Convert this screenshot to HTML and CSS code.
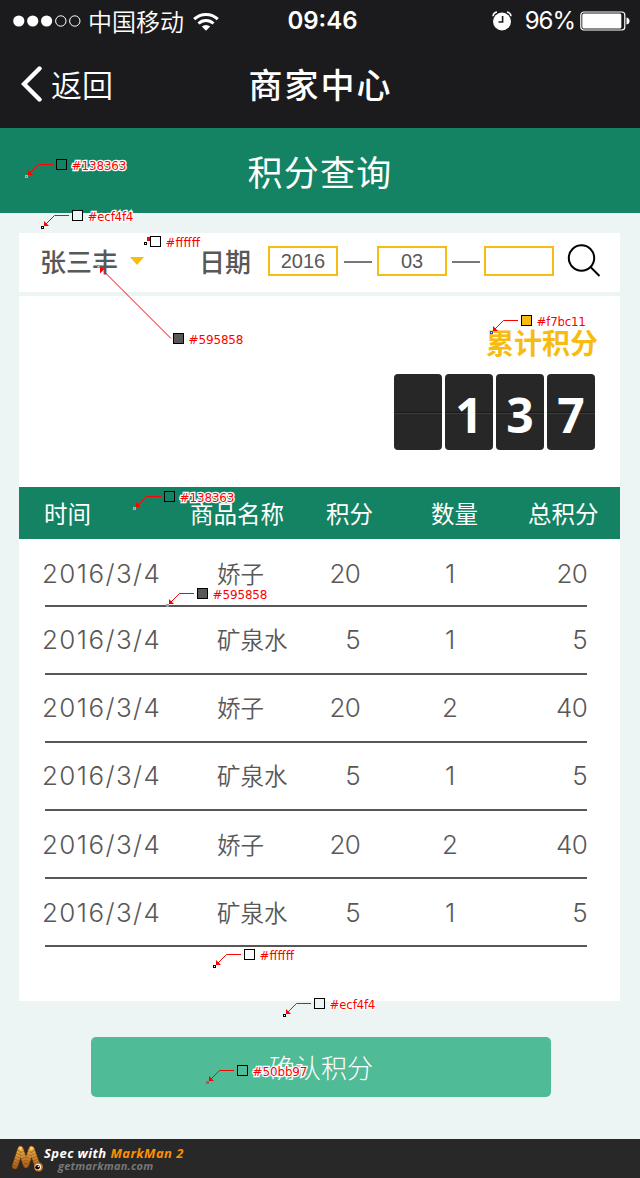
FILE: index.html
```html
<!DOCTYPE html>
<html lang="zh-CN">
<head>
<meta charset="utf-8">
<title>商家中心</title>
<link rel="stylesheet" href="styles.css">
</head>
<body>
<div class="screen">
  <header class="top">
    <div class="status">
      <div class="status-left">
        <svg class="signal" width="68" height="12" viewBox="0 0 68 12"><g fill="#fff"><circle cx="5.8" cy="6" r="5.6"/><circle cx="19.7" cy="6" r="5.6"/><circle cx="33.6" cy="6" r="5.6"/></g><g fill="none" stroke="#fff"><circle cx="47.8" cy="6" r="5.2"/><circle cx="61.8" cy="6" r="5.2"/></g></svg>
        <span class="carrier">中国移动</span>
        <svg width="26" height="19" viewBox="0 0 26 19"><g fill="none" stroke="#fff" stroke-width="3"><path d="M1.2 7.2a17 17 0 0 1 23.6 0"/><path d="M5.5 11.5a11 11 0 0 1 15 0"/></g><path d="M8.8 14.6a6.3 6.3 0 0 1 8.4 0L13 18.8z" fill="#fff"/></svg>
      </div>
      <span class="clock">09:46</span>
      <div class="status-right">
        <svg width="20" height="20" viewBox="0 0 20 20"><circle cx="10" cy="10.5" r="9" fill="#fff"/><path d="M1 5.2Q1.300 1.800 5 1.100M19 5.200Q18.700 1.800 15 1.100" fill="none" stroke="#fff" stroke-width="1.500"/><path d="M10.600 5v6H6.500" fill="none" stroke="#1b1b1e" stroke-width="1.600"/></svg>
        <span class="percent">96%</span>
        <svg width="50" height="20" viewBox="0 0 50 20"><rect x=".8" y="1" width="44" height="18" rx="3" fill="none" stroke="#fff" stroke-width="1.200"/><rect x="2.300" y="2.500" width="39" height="15" rx="1.500" fill="#fff"/><path d="M46.500 6.500q3 .5 3 3.500t-3 3.500z" fill="#fff"/></svg>
      </div>
    </div>
    <nav class="nav">
      <a class="back"><svg width="22" height="36" viewBox="0 0 22 36"><path d="M18.500 2.500L3 18l15.500 15.500" fill="none" stroke="#fff" stroke-width="4.400" stroke-linecap="round"/></svg><span>返回</span></a>
      <h1>商家中心</h1>
    </nav>
  </header>
  <h2 class="title">积分查询</h2>
  <main class="content">
    <section class="filter">
      <span class="person">张三丰</span><i class="caret"></i>
      <span class="date">日期</span>
      <span class="field">2016</span><i class="dash"></i><span class="field">03</span><i class="dash short"></i><span class="field"></span>
      <svg class="search" width="34" height="34" viewBox="0 0 34 34"><g fill="none" stroke="#000" stroke-width="2"><circle cx="14.500" cy="14" r="12.700"/><path d="M23.500 23L32.500 32"/></g></svg>
    </section>
    <section class="panel">
      <div class="total">
        <div class="total-label">累计积分</div>
        <div class="counter"><b></b><b>1</b><b>3</b><b>7</b></div>
      </div>
      <div class="thead"><span>时间</span><span>商品名称</span><span>积分</span><span>数量</span><span>总积分</span></div>
      <div class="rows">
        <div class="row first"><span>2016/3/4</span><span class="name">娇子</span><span>20</span><span>1</span><span>20</span></div>
        <div class="row"><span>2016/3/4</span><span class="name">矿泉水</span><span>5</span><span>1</span><span>5</span></div>
        <div class="row"><span>2016/3/4</span><span class="name">娇子</span><span>20</span><span>2</span><span>40</span></div>
        <div class="row"><span>2016/3/4</span><span class="name">矿泉水</span><span>5</span><span>1</span><span>5</span></div>
        <div class="row low"><span>2016/3/4</span><span class="name">娇子</span><span>20</span><span>2</span><span>40</span></div>
        <div class="row low"><span>2016/3/4</span><span class="name">矿泉水</span><span>5</span><span>1</span><span>5</span></div>
      </div>
    </section>
    <button class="confirm">确认积分</button>
  </main>
  <footer class="brand">
    <svg width="33" height="28" viewBox="0 0 33 28"><defs><linearGradient id="worm" x2="0" y2="1"><stop stop-color="#efb04c"/><stop offset="1" stop-color="#a85c18"/></linearGradient></defs><g fill="none" stroke-linecap="round" stroke-linejoin="round"><path d="M4 21L9.500 4L15 20L20.500 4L27 22" stroke="#6a380e" stroke-width="6.600"/><path d="M4 21L9.500 4L15 20L20.500 4L27 22" stroke="url(#worm)" stroke-width="5.200"/><path d="M4 21L9.500 4L15 20L20.500 4L27 22" stroke="#6e3a0d" stroke-width="5.500" stroke-linecap="butt" stroke-dasharray=".7 2.300" opacity=".5"/></g><circle cx="9.500" cy="3.500" r="1.400" fill="#ffd477"/><circle cx="20.500" cy="3.500" r="1.400" fill="#ffd477"/><circle cx="27.500" cy="22" r="4.500" fill="#c87a28"/><circle cx="27" cy="22" r="3.100" fill="#fff"/><circle cx="26.500" cy="22.300" r="2.300" fill="#080808"/><circle cx="27.300" cy="21.500" r=".7" fill="#fff"/></svg>
    <div class="brand-text"><div>Spec with <em>MarkMan 2</em></div><small>getmarkman.com</small></div>
  </footer>

  <svg class="notes" width="640" height="1178" viewBox="0 0 640 1178">
    <defs>
      <g id="pointer"><path d="M-3 5.500H-17.500L-26 14" fill="none" stroke="#f00"/><path d="M-28 11V16H-23z" fill="#f00"/></g>
      <rect id="dot" x="-30.500" y="16.500" width="2" height="2" fill="#fff" stroke="#000"/>
      <rect id="pinkdot" x="-30.500" y="16.500" width="2" height="2" fill="#777" stroke="#e994a8"/>
    </defs>
    <g transform="translate(56 159)"><use href="#pointer"/><use href="#pinkdot"/><rect class="swatch" fill="#138363"/><text x="15.500" y="11" textLength="55">#138363</text></g>
    <g transform="translate(72 210)"><use href="#pointer"/><use href="#dot"/><rect class="swatch" fill="#ecf4f4"/><text x="15.500" y="11" textLength="46">#ecf4f4</text></g>
    <g transform="translate(150 236)"><path d="M-3 1h3v4h-3z" fill="#f00"/><rect x="-5.500" y="6.500" width="2" height="2" fill="#fff" stroke="#000"/><rect class="swatch" fill="#fff"/><text x="15.500" y="11" textLength="34.500">#ffffff</text></g>
    <g transform="translate(173 333)"><path d="M-2 5.500L-69-61.500" stroke="#f00"/><path d="M-73-65.500v6l5-5z" fill="#f00"/><rect x="-75.500" y="-67.500" width="2" height="2" fill="#ccc" stroke="#999"/><rect class="swatch" fill="#595858"/><text x="15.500" y="11" textLength="55">#595858</text></g>
    <g transform="translate(521 315)"><use href="#pointer"/><rect x="-30.500" y="16.500" width="2" height="2" fill="#fff" stroke="#1f49d8"/><rect class="swatch" fill="#f7bc11"/><text x="15.500" y="11" textLength="49.500">#f7bc11</text></g>
    <g transform="translate(164 491)"><use href="#pointer"/><use href="#pinkdot"/><rect class="swatch" fill="#138363"/><text x="15.500" y="11" textLength="55">#138363</text></g>
    <g transform="translate(197 588)"><use href="#pointer"/><rect x="-30.500" y="16.500" width="2" height="2" fill="#aaa" stroke="#999"/><rect class="swatch" fill="#595858"/><text x="15.500" y="11" textLength="55">#595858</text></g>
    <g transform="translate(244 949)"><use href="#pointer"/><use href="#dot"/><rect class="swatch" fill="#fff"/><text x="15.500" y="11" textLength="34.500">#ffffff</text></g>
    <g transform="translate(314 998)"><use href="#pointer"/><use href="#dot"/><rect class="swatch" fill="#ecf4f4"/><text x="15.500" y="11" textLength="46">#ecf4f4</text></g>
    <g transform="translate(237 1065)"><use href="#pointer"/><rect x="-30.500" y="16.500" width="2" height="2" fill="#777" stroke="#c04d60"/><rect class="swatch" fill="#50bb97"/><text x="15.500" y="11" textLength="55">#50bb97</text></g>
  </svg>
</div>
</body>
</html>
```
FILE: styles.css
```css
* { box-sizing: border-box; }
body { margin: 0; font-family: "Noto Sans CJK SC", sans-serif; background: #ecf4f4; }
.screen { position: relative; width: 640px; height: 1178px; overflow: hidden; display: flex; flex-direction: column; }
.top { height: 128px; background: #1b1b1e; color: #fff; flex: none; }
.status { height: 40px; display: grid; grid-template-columns: 1fr auto 1fr; align-items: center; padding: 1px 10px 0 13px; }
.status-left, .status-right { display: flex; align-items: center; }
.status-right { justify-content: flex-end; }
.carrier { font-size: 24px; font-weight: 350; line-height: 38px; margin: 0 9px 0 7px; }
.clock { font: 600 24px/40px Inter, sans-serif; letter-spacing: 0; margin-left: 2px; }
.percent { font: 400 24px/40px Inter, sans-serif; margin: 0 5px 0 13px; letter-spacing: -1px; }
.nav { height: 88px; display: grid; grid-template-columns: 1fr auto 1fr; padding-left: 21px; align-items: center; }
.back { display: flex; align-items: center; gap: 8px; font-size: 31px; font-weight: 350; line-height: 86px; }
.nav h1 { margin: 0 0 0 -20px; font-size: 34px; font-weight: 500; letter-spacing: 2px; line-height: 88px; }
.title { margin: 0; height: 85px; flex: none; background: #138363; color: #fff; font-size: 35px; font-weight: 400; letter-spacing: 1.2px; line-height: 85px; text-align: center; }
.content { flex: 1; padding: 20px 20px 0 19px; display: flex; flex-direction: column; }
.filter { height: 59px; flex: none; background: #fff; display: flex; align-items: center; padding-left: 21px; color: #595858; font-size: 26px; font-weight: 500; margin-bottom: 4px; }
.person, .date { line-height: 52px; margin-bottom: 4px; }
.person { width: 90px; }
.caret { border: 7px solid transparent; border-top: 8px solid #f7bc11; border-bottom: 0; width: 14px; margin: 0 55px 3px 0; }
.date { width: 69px; }
.field { width: 70px; height: 30px; flex: none; border: 2px solid #f7bc11; font: 400 20px/26px "Liberation Sans", sans-serif; text-align: center; margin-bottom: 3px; }
.dash { width: 28px; height: 2px; background: #777; margin: 0 5px 2px 6px; flex: none; }
.dash.short { margin: 0 4px 2px 5px; }
.search { margin: 0 0 4px 13px; }
.panel { height: 705px; flex: none; background: #fff; }
.total { height: 191px; padding: 28px 22px 0 0; display: flex; flex-direction: column; align-items: flex-end; }
.total-label { color: #f7bc11; font-size: 28px; font-weight: 700; line-height: 36px; }
.counter { display: flex; gap: 3px; margin: 14px 3px 0 0; }
.counter b { width: 48px; height: 76px; border-radius: 4px; color: #fff; text-align: center; font: 700 48px/82px "Open Sans", sans-serif; background: linear-gradient(#191919, #191919) 0 38px / 100% 1px no-repeat, linear-gradient(#3d3d3d, #3d3d3d) 0 39px / 100% 1px no-repeat, #272727; }
.thead { height: 52px; background: #138363; color: #fff; font-size: 23.5px; font-weight: 400; line-height: 53px; display: grid; grid-template-columns: 146px 136px 105px 97px 1fr; padding-left: 25px; }
.rows { padding: 0 33px 0 26px; }
.row { height: 68px; border-bottom: 2px solid #595858; color: #595858; display: grid; grid-template-columns: 172px 98px 45px 120px 1fr; font: 300 26px/65px Inter, sans-serif; }
.row.first { line-height: 69px; }
.row.low { line-height: 67px; }
.row span:first-child { margin-left: -3px; letter-spacing: 1.4px; }
.row .name { font-family: "Noto Sans CJK SC", sans-serif; font-size: 23.5px; font-weight: 350; }
.row span:nth-child(3), .row span:nth-child(5) { text-align: right; letter-spacing: -0.7px; }
.row span:nth-child(4) { text-align: center; padding-left: 60px; }
.confirm { width: 460px; height: 60px; margin: 36px 0 0 72px; border: 0; border-radius: 5px; background: #50bb97; color: #fff; font: 300 26px/60px "Noto Sans CJK SC", sans-serif; padding: 0; }
.brand { height: 39px; background: #282828; display: flex; align-items: flex-start; padding: 6px 0 0 11px; flex: none; }
.brand-text { font: italic 700 13px/16px "Open Sans", sans-serif; color: #fff; letter-spacing: 0.42px; }
.brand-text em { color: #ff9000; }
.brand-text small { display: block; margin-left: 14px; font-size: 11px; line-height: 10px; color: #777; letter-spacing: 0.25px; }
.notes { position: absolute; left: 0; top: 0; pointer-events: none; }
.notes .swatch { x: .5px; y: .5px; width: 10px; height: 10px; stroke: #000; stroke-width: 1px; }
.notes text { font: 12px "DejaVu Sans", sans-serif; fill: #f00; stroke: #fff; stroke-width: 2.5px; paint-order: stroke; }
```
